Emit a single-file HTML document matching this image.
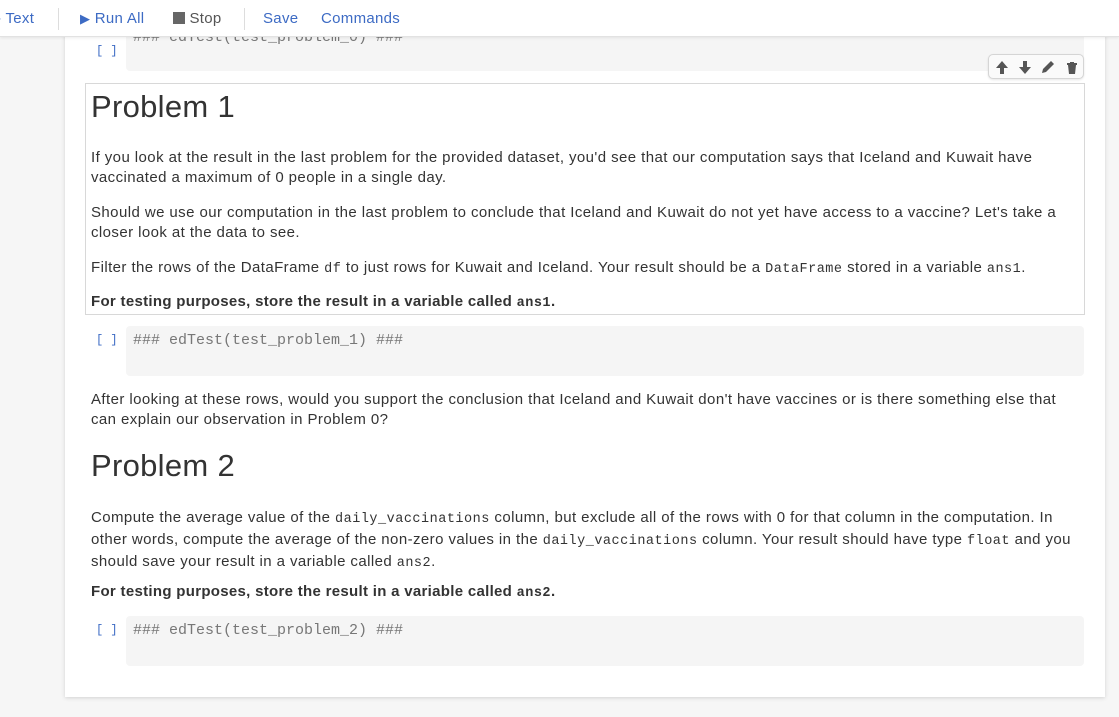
<!DOCTYPE html>
<html><head><meta charset="utf-8"><style>
*{margin:0;padding:0;box-sizing:border-box}
body{width:1119px;height:717px;overflow:hidden;background:#f6f6f6;font-family:"Liberation Sans","DejaVu Sans",sans-serif;color:#333;position:relative}
.tb{position:absolute;left:0;top:0;width:1119px;height:37px;background:#fff;border-bottom:1px solid #e2e2e2;box-shadow:0 1px 3px rgba(0,0,0,.08);z-index:5;font-size:15px;color:#3d6bc4;letter-spacing:.3px}
.tb span{position:absolute;top:10px}
.sep{position:absolute;top:8px;width:1px;height:22px;background:#ddd}
.nb{position:absolute;left:65px;top:30px;width:1040px;height:667px;background:#fff;box-shadow:0 1px 4px rgba(0,0,0,.15)}
.code{position:absolute;left:126px;width:958px;height:50px;background:#f5f5f5;border-radius:4px;font-family:"Liberation Mono",monospace;font-size:15px;color:#777;padding:6px 0 0 7px}
.pr{position:absolute;left:96px;font-family:"Liberation Mono",monospace;font-size:12px;color:#3d6bc4}
.t{position:absolute;left:91px;width:992px;font-size:15px;letter-spacing:.42px;line-height:20px;color:#333}
h1{position:absolute;left:91px;font-weight:normal;font-size:31px;color:#333;letter-spacing:.3px}
code{font-family:"Liberation Mono",monospace;font-size:13.5px;letter-spacing:.5px}
.md{position:absolute;left:85px;top:83px;width:1000px;height:232px;border:1px solid #d8d8d8}
.ic{position:absolute;left:988px;top:54px;width:96px;height:25px;background:#fafafa;border:1px solid #d5d5d5;border-radius:5px;box-shadow:0 1px 2px rgba(0,0,0,.1)}
</style></head><body>
<div class="tb">
<span style="left:-4px">- Text</span>
<div class="sep" style="left:58px"></div>
<span style="left:80px"><span style="position:static;font-size:13px">▶</span> Run All</span>
<span style="left:173px;color:#555"><span style="position:static;display:inline-block;width:12px;height:12px;background:#666;vertical-align:-1px"></span> Stop</span>
<div class="sep" style="left:244px"></div>
<span style="left:263px">Save</span>
<span style="left:321px">Commands</span>
</div>
<div class="nb"></div>
<div class="code" style="top:20px;height:51px;padding-top:9px">### edTest(test_problem_0) ###</div>
<div class="pr" style="top:44px">[ ]</div>
<div class="md"></div>
<div class="ic">
<svg width="96" height="25" viewBox="0 0 96 25">
<path d="M11 19v-6H7l6-7 6 7h-4v6z" fill="#555"/>
<path d="M34 6v6h-4l6 7 6-7h-4V6z" fill="#555"/>
<path d="M53 18l1-4 8-8 3 3-8 8z" fill="#555"/>
<path d="M78 8h10v2H78zM81 7h4v1h-4zM79 10h8l-1 9h-6z" fill="#555"/>
</svg></div>
<h1 style="top:89px">Problem 1</h1>
<div class="t" style="top:148px">If you look at the result in the last problem for the provided dataset, you'd see that our computation says that Iceland and Kuwait have vaccinated a maximum of 0 people in a single day.</div>
<div class="t" style="top:203px">Should we use our computation in the last problem to conclude that Iceland and Kuwait do not yet have access to a vaccine? Let's take a closer look at the data to see.</div>
<div class="t" style="top:258px">Filter the rows of the DataFrame <code>df</code> to just rows for Kuwait and Iceland. Your result should be a <code>DataFrame</code> stored in a variable <code>ans1</code>.</div>
<div class="t" style="top:292px;font-weight:bold;letter-spacing:.3px">For testing purposes, store the result in a variable called <code>ans1</code>.</div>
<div class="code" style="top:326px">### edTest(test_problem_1) ###</div>
<div class="pr" style="top:333px">[ ]</div>
<div class="t" style="top:390px">After looking at these rows, would you support the conclusion that Iceland and Kuwait don't have vaccines or is there something else that can explain our observation in Problem 0?</div>
<h1 style="top:448px">Problem 2</h1>
<div class="t" style="top:508px">Compute the average value of the <code>daily_vaccinations</code> column, but exclude all of the rows with 0 for that column in the computation. In other words, compute the average of the non-zero values in the <code>daily_vaccinations</code> column. Your result should have type <code>float</code> and you should save your result in a variable called <code>ans2</code>.</div>
<div class="t" style="top:582px;font-weight:bold;letter-spacing:.3px">For testing purposes, store the result in a variable called <code>ans2</code>.</div>
<div class="code" style="top:616px">### edTest(test_problem_2) ###</div>
<div class="pr" style="top:623px">[ ]</div>
</body></html>
